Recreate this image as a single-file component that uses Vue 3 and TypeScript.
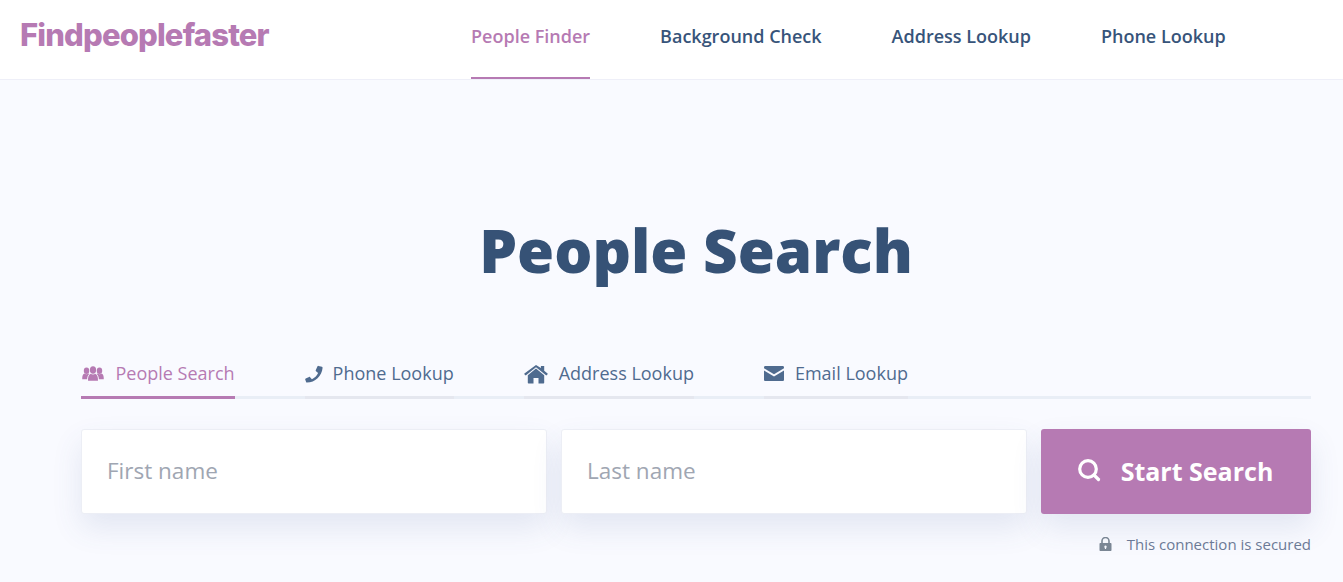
<script setup lang="ts">
const navItems: string[] = ['People Finder', 'Background Check', 'Address Lookup', 'Phone Lookup']
</script>

<template>
  <div class="page">
    <header class="header">
      <div class="logo">Findpeoplefaster</div>
      <nav class="nav">
        <a v-for="(item, i) in navItems" :key="item" class="nav-item" :class="{ active: i === 0 }">{{ item }}</a>
      </nav>
    </header>
    <main class="main">
      <h1 class="title">People Search</h1>
      <div class="tabs">
        <a class="tab active">
          <svg class="ico ico-people" width="22" height="15" viewBox="0 0 23 16" fill="currentColor">
            <ellipse cx="4.600" cy="5" rx="2.900" ry="3.400"/>
            <ellipse cx="18.400" cy="5" rx="2.900" ry="3.400"/>
            <path d="M0 14c0-3.200.5-5.300 2.300-6 .9.900 3.500.9 4.600 0l.6.400C6 9.800 5.300 11.600 5.200 14zM23 14c0-3.200-.5-5.300-2.300-6-.9.900-3.500.9-4.600 0l-.6.400c1.500 1.400 2.200 3.200 2.300 5.600z"/>
            <ellipse cx="11.500" cy="4.200" rx="3.300" ry="4"/>
            <path d="M6.200 15.800c-.2-4 .7-6.800 2.800-7.600 1.200 1 3.800 1 5 0 2.100.8 3 3.600 2.800 7.600z"/>
          </svg>
          <span>People Search</span>
        </a>
        <a class="tab">
          <svg class="ico" width="18" height="18" viewBox="0 0 18 18" fill="currentColor">
            <path d="M17 1.800 13.400.9c-.4-.1-.8.100-1 .5l-1.700 3.900c-.1.300 0 .7.300 1l2.100 1.800c-1.300 2.700-3.500 4.900-6.200 6.200l-1.800-2.100c-.3-.3-.7-.4-1-.3L.7 13.500c-.4.200-.6.600-.5 1l.9 2.500c.1.400.4.600.8.600 8.300 0 15-6.700 15.700-14.800 0-.400-.2-.900-.6-1z"/>
          </svg>
          <span>Phone Lookup</span>
        </a>
        <a class="tab wide">
          <svg class="ico" width="24" height="19" viewBox="0 0 24 19" fill="currentColor">
            <path d="M12 3.500 3.800 10.300V17.800c0 .4.300.7.700.7h5v-5.500h5v5.500h5c.4 0 .7-.3.700-.7V10.300z"/>
            <path d="M23.600 8.600 20.200 5.800V1h-3.300v2.100L12 0 .4 8.600c-.2.200-.2.500 0 .7l.9 1c.2.200.5.200.7 0L12 2.200l10 8.100c.2.200.5.200.7 0l.9-1c.2-.2.200-.5 0-.7z"/>
          </svg>
          <span>Address Lookup</span>
        </a>
        <a class="tab wide">
          <svg class="ico ico-mail" width="20" height="15" viewBox="0 0 20 15" fill="currentColor">
            <path d="M0 1.300C0 .6.600 0 1.300 0h17.400c.7 0 1.300.6 1.300 1.300v1L10 8.300 0 2.300z"/>
            <path d="M0 4.500 10 10.500 20 4.500v9.200c0 .7-.6 1.300-1.300 1.300H1.300C.6 15 0 14.400 0 13.700z"/>
          </svg>
          <span>Email Lookup</span>
        </a>
      </div>
      <form class="form" @submit.prevent>
        <input class="field" type="text" placeholder="First name" />
        <input class="field" type="text" placeholder="Last name" />
        <button class="btn" type="submit">
          <svg width="23" height="23" viewBox="0 0 23 23" fill="none" stroke="currentColor" stroke-width="3.200">
            <circle cx="10" cy="10" r="8.300"/>
            <path d="M16 16 20.500 20.500" stroke-linecap="round"/>
          </svg>
          <span>Start Search</span>
        </button>
      </form>
      <div class="secure">
        <svg width="13" height="14" viewBox="0 0 13 14" fill="#7a8694">
          <path d="M1.500 6h10c.6 0 1 .4 1 1v6c0 .6-.4 1-1 1h-10c-.6 0-1-.4-1-1V7c0-.6.4-1 1-1zm5 2.500a1.300 1.300 0 0 0-.6 2.400v1.100h1.200v-1.100a1.300 1.300 0 0 0-.6-2.400z" fill-rule="evenodd"/>
          <path d="M3 6.500V4a3.500 3.500 0 0 1 7 0v2.500" fill="none" stroke="#7a8694" stroke-width="1.600"/>
        </svg>
        <span>This connection is secured</span>
      </div>
    </main>
  </div>
</template>

<style>
html, body { margin: 0; background: #f9faff; }
</style>

<style scoped>
.page {
  height: 582px;
  overflow: hidden;
  background: #f9faff;
  font-family: "Open Sans", sans-serif;
}
.header {
  display: flex;
  height: 79px;
  background: #fff;
  border-bottom: 1px solid #eeeff8;
  padding-left: 20px;
  align-items: stretch;
}
.logo {
  width: 451px;
  font-family: Inter, sans-serif;
  font-weight: 800;
  font-size: 31px;
  letter-spacing: -0.85px;
  line-height: 70px;
  color: #b67ab3;
}
.nav { display: flex; gap: 70px; }
.nav-item {
  font-size: 18px;
  font-weight: 600;
  line-height: 72px;
  color: #37547a;
  height: 79px;
  box-sizing: border-box;
}
.nav-item.active {
  color: #b67ab3;
  border-bottom: 2px solid #b67ab3;
}
.main { padding: 0 32px 0 81px; }
.title {
  margin: 128px 0 0;
  text-align: center;
  font-size: 60px;
  font-weight: 800;
  line-height: 84px;
  color: #365276;
}
.tabs {
  display: flex;
  gap: 70px;
  margin-top: 68px;
  border-bottom: 3px solid #e9eef6;
  height: 36px;
}
.tab {
  display: flex;
  align-items: flex-start;
  gap: 10px;
  height: 39px;
  box-sizing: border-box;
  font-size: 18px;
  font-weight: 500;
  line-height: 26px;
  color: #4f6b8f;
  border-bottom: 3px solid #e5e7ef;
}
.tab.wide { gap: 11px; }
.tab.active {
  gap: 11.5px;
  color: #b67ab3;
  border-bottom-color: #b67ab3;
}
.ico { margin-top: 5px; flex: none; }
.ico-people { margin-top: 6px; margin-left: 1px; }
.ico-mail { margin-top: 6px; }
.form {
  display: grid;
  grid-template-columns: 466px 466px 270px;
  gap: 14px;
  margin-top: 30px;
}
.field {
  height: 85px;
  box-sizing: border-box;
  padding: 0 25px 2px;
  border: 1px solid #eceef5;
  border-radius: 3px;
  background: #fff;
  font-family: inherit;
  font-size: 22.5px;
  color: #37547a;
  outline: none;
  box-shadow: 0 14px 30px rgba(68, 88, 144, 0.12);
}
.field::placeholder { color: #a0a6b2; opacity: 1; }
.btn {
  height: 85px;
  display: flex;
  align-items: center;
  justify-content: center;
  gap: 20px;
  padding: 0 1px 2px 0;
  border: 0;
  border-radius: 3px;
  background: #b67ab3;
  color: #fff;
  font-family: inherit;
  font-size: 25px;
  font-weight: 700;
  box-shadow: 0 14px 30px rgba(68, 88, 144, 0.12);
}
.secure {
  display: flex;
  justify-content: flex-end;
  align-items: center;
  gap: 15px;
  margin-top: 20px;
  font-size: 15px;
  line-height: 20px;
  color: #6c7a96;
}
</style>
